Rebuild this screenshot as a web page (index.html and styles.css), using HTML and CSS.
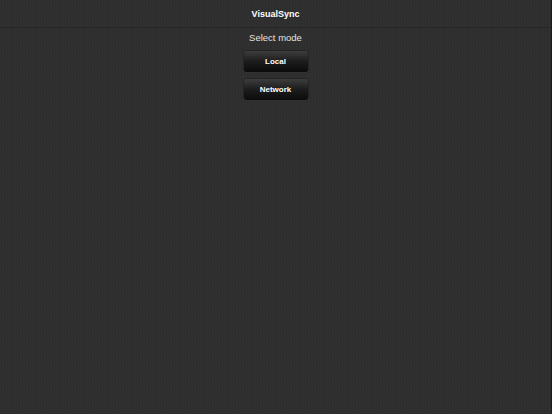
FILE: index.html
```html
<!DOCTYPE html>
<html>
<head>
<meta charset="utf-8">
<link rel="stylesheet" href="styles.css">
</head>
<body>
<div class="app">
  <header class="bar"><span class="title">VisualSync</span></header>
  <main class="content">
    <div class="label">Select mode</div>
    <button class="btn">Local</button>
    <button class="btn">Network</button>
  </main>
</div>
</body>
</html>
```
FILE: styles.css
```css
html, body {
  margin: 0;
  padding: 0;
  height: 100%;
}
body {
  background-color: #2f2f2f;
  background-image: repeating-conic-gradient(#2d2d2d 0 25%, #313131 0 50%);
  background-size: 3px 3px;
  font-family: "Liberation Sans", Arial, sans-serif;
}
.app {
  height: 100%;
  border-right: 1px solid #1b1b1b;
  box-sizing: border-box;
  display: flex;
  flex-direction: column;
}
.bar {
  height: 27px;
  border-bottom: 1px solid #272727;
  display: flex;
  align-items: center;
  justify-content: center;
}
.title {
  color: #ffffff;
  font-size: 9px;
  font-weight: bold;
  padding-top: 1px;
}
.content {
  display: flex;
  flex-direction: column;
  align-items: center;
  padding-top: 4px;
  gap: 7px;
}
.label {
  color: #e2e2e2;
  font-size: 9.5px;
  line-height: 12px;
}
.btn {
  width: 64px;
  height: 21px;
  border: none;
  border-radius: 3px;
  background: linear-gradient(#3d3d3d, #1c1c1c 50%, #0b0b0b);
  box-shadow: 0 1px 0 rgba(255,255,255,0.06), 0 0 0 0.5px #1a1a1a;
  color: #ffffff;
  font-family: "Liberation Sans", Arial, sans-serif;
  font-size: 8px;
  font-weight: bold;
  padding: 0;
}
```
